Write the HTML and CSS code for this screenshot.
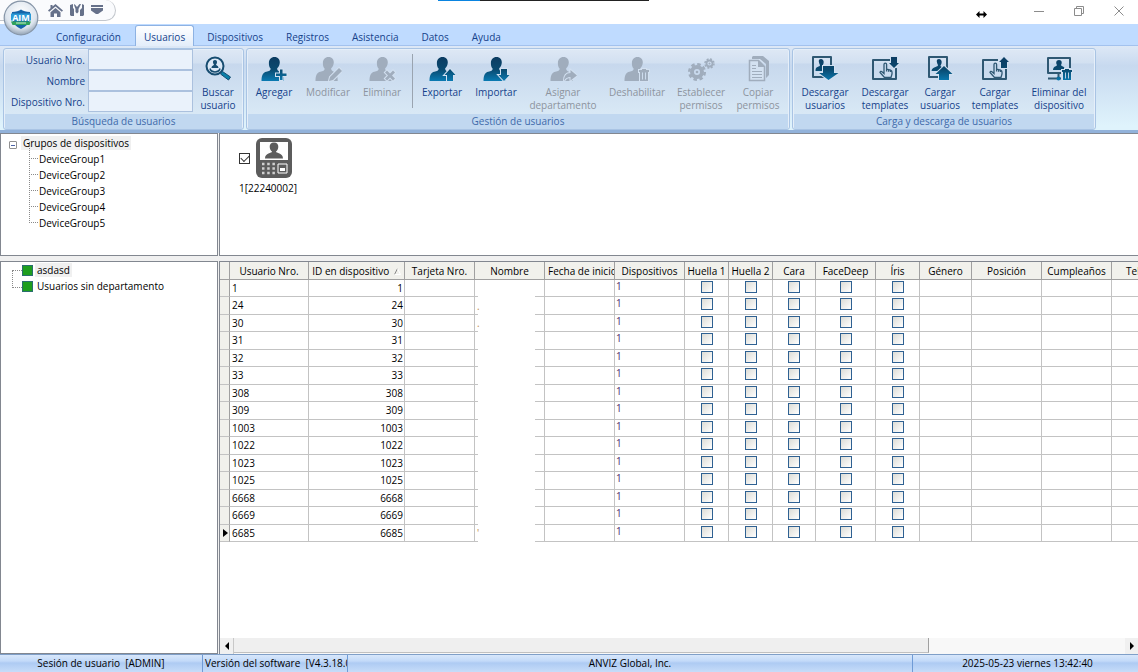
FILE: index.html
```html
<!DOCTYPE html>
<html lang="es">
<head>
    <meta charset="UTF-8">
    <meta name="viewport" content="width=device-width, initial-scale=1.0">
    <title>Usuarios</title>
    <link rel="stylesheet" href="styles.css">
</head>
<body>
    <!-- Shared shapes -->
    <svg class="defs" aria-hidden="true">
        <defs>
            <linearGradient id="blue" gradientUnits="userSpaceOnUse" x1="0" y1="2" x2="0" y2="27">
                <stop offset="0" stop-color="#0c3c62"/>
                <stop offset="0.5" stop-color="#0a4a70"/>
                <stop offset="1" stop-color="#0a7fb8"/>
            </linearGradient>
            <symbol id="person" viewBox="0 0 28 28">
                <path d="M14.500 2c3.600 0 5.500 2.600 5.300 5.600-.1 2.600-1.200 4.600-2.700 6 0 1.500 1 2.600 3.100 3.400 2.600 1 3.500 3.600 3.500 9H1.500c0-5.500 1.500-8.500 4.800-9.200 2.800-.6 4.400-1.600 4.400-3.100C9.200 12.300 8.800 10 8.900 7.600 9 4.500 11 2 14.500 2z"/>
            </symbol>
            <symbol id="hand" viewBox="0 0 14 16">
                <path d="M5 9V2.500a1.300 1.300 0 0 1 2.600 0V7l4 1.200c1 .3 1.400.8 1.400 1.800V12l-1 3.500H5.500L1 10.500c0-1.200 1.300-1.500 2-.8L5 11.500V9M7.600 7v2.500M9.600 7.800v2M11.500 8.300V10" fill="none" stroke-width="1.300"/>
            </symbol>
        </defs>
    </svg>

    <header class="titlebar">
        <div class="quick">
            <button type="button" aria-label="Inicio">
                <svg width="15" height="13" viewBox="0 0 15 13"><path d="M7.500 0L15 6.500l-1.200 1.300L7.500 2.600 1.200 7.800 0 6.500 2.500 4.300V1h2v1.600zM7.500 4l5 4.200V13H9V9.500H6V13H2.500V8.200z"/></svg>
            </button>
            <button type="button" aria-label="Herramientas">
                <svg width="14" height="12" viewBox="0 0 14 12"><path d="M0 1l3-1v4l1 1v7H1l-1-1zM4.500 0L7 3l2.500-3H11L8.500 5v3L7 9.500 5.500 8V5L4 1zM12 0l2 1v10l-1 1h-3V6l2-2z"/></svg>
            </button>
            <button type="button" aria-label="Personalizar">
                <svg width="12" height="10" viewBox="0 0 12 10"><path d="M0 0h12v2H0zM0 3h12v2.500L7 9H5L0 5.500z"/></svg>
            </button>
        </div>
        <div class="accent"></div>
        <svg class="resize" width="11" height="7" viewBox="0 0 11 7"><path d="M0 3.500L3.500 0v2.500h4V0L11 3.500 7.500 7V4.500h-4V7z"/></svg>
        <div class="window-buttons">
            <button type="button" aria-label="Minimizar"><svg width="10" height="10" viewBox="0 0 10 10"><path d="M0 5.500h10"/></svg></button>
            <button type="button" aria-label="Restaurar"><svg width="10" height="10" viewBox="0 0 10 10"><path d="M.5 2.500h7v7h-7zM2.500 2.500v-2h7v7h-2"/></svg></button>
            <button type="button" aria-label="Cerrar"><svg width="10" height="10" viewBox="0 0 10 10"><path d="M.5.5l9 9M9.500.5l-9 9"/></svg></button>
        </div>
    </header>

    <button type="button" class="app-button" aria-label="Menú">
        <svg width="36" height="36" viewBox="0 0 36 36">
            <defs>
                <radialGradient id="orb" cx="0.5" cy="0.35" r="0.65">
                    <stop offset="0" stop-color="#ffffff"/>
                    <stop offset="0.7" stop-color="#dde5ee"/>
                    <stop offset="1" stop-color="#93a3b5"/>
                </radialGradient>
            </defs>
            <circle cx="18" cy="18" r="16.800" fill="url(#orb)" stroke="#8796a8" stroke-width="1.200"/>
            <path d="M9 12c4 0 7-1 9-2.500 2 1.500 5 2.500 9 2.500v6c0 5-4 8.500-9 11-5-2.500-9-6-9-11z" fill="#1565a8"/>
            <path d="M8 13.500h20v7H8z" fill="#2b9ad6"/>
            <text x="18" y="20.500" class="logo-text">AIM</text>
            <path d="M8 21.500h20l-1.500 3.500h-17z" fill="#2fa25b"/>
            <path d="M13 23h10" stroke="#c9ecd3"/>
        </svg>
    </button>

    <nav class="tabs">
        <a href="#">Configuración</a>
        <a href="#" class="active">Usuarios</a>
        <a href="#">Dispositivos</a>
        <a href="#">Registros</a>
        <a href="#">Asistencia</a>
        <a href="#">Datos</a>
        <a href="#">Ayuda</a>
    </nav>

    <div class="ribbon">
        <section class="group">
            <div class="tools">
                <form class="search">
                    <label for="user-no">Usuario Nro.</label><input type="text" id="user-no">
                    <label for="user-name">Nombre</label><input type="text" id="user-name">
                    <label for="device-no">Dispositivo Nro.</label><input type="text" id="device-no">
                </form>
                <button type="button" class="tool w50">
                    <svg width="28" height="28" viewBox="0 0 28 28">
                        <circle cx="11" cy="11" r="8.500" fill="#dbe8f6" stroke="#164c70" stroke-width="2"/>
                        <path d="M18.500 16.500l8 5.500-2 3-8-6z" fill="#0a7fa8" stroke="#164c70"/>
                        <path d="M11 5c1.600 0 2.200 1 2 2.400-.1 1-.5 1.600-1 2.100 0 1 2.500 1 2.500 3.500h-7c0-2.500 2.500-2.500 2.500-3.500-.5-.5-.9-1.100-1-2.100C8.800 6 9.400 5 11 5z" fill="#164c70"/>
                        <path d="M6 13.500c1 4.500 9 4.500 10 0" fill="none" stroke="#164c70" stroke-width="1.500"/>
                    </svg>
                    Buscar<br>usuario
                </button>
            </div>
            <h2>Búsqueda de usuarios</h2>
        </section>

        <section class="group manage">
            <div class="tools">
                <button type="button" class="tool w54">
                    <svg width="28" height="28" viewBox="0 0 28 28"><use href="#person"/><path class="halo" d="M16 18.500h4v-4h2.500v4h4V21h-4v4H20v-4h-4z"/></svg>
                    Agregar
                </button>
                <button type="button" class="tool w54" disabled>
                    <svg width="28" height="28" viewBox="0 0 28 28"><use href="#person"/><path class="halo" d="M15 26l1-4 9-9 3 3-9 9z"/></svg>
                    Modificar
                </button>
                <button type="button" class="tool w54" disabled>
                    <svg width="28" height="28" viewBox="0 0 28 28"><use href="#person"/><path class="halo" d="M17 17.500l2-2 3 3 3-3 2 2-3 3 3 3-2 2-3-3-3 3-2-2 3-3z"/></svg>
                    Eliminar
                </button>
                <span class="divider"></span>
                <button type="button" class="tool w54">
                    <svg width="28" height="28" viewBox="0 0 28 28"><use href="#person"/><path class="halo" d="M22 14l5.500 6H25v6h-6v-6h-2.500z"/></svg>
                    Exportar
                </button>
                <button type="button" class="tool w54">
                    <svg width="28" height="28" viewBox="0 0 28 28"><use href="#person"/><path class="halo" d="M19 14h6v6h2.500L22 26l-5.500-6H19z"/></svg>
                    Importar
                </button>
                <button type="button" class="tool w80" disabled>
                    <svg width="28" height="28" viewBox="0 0 28 28"><use href="#person"/><path class="halo" d="M15 26c0-5 2-8 6.500-8v-3l6.500 5.500-6.500 5V22c-3 0-5 1-6.500 4z"/></svg>
                    Asignar<br>departamento
                </button>
                <button type="button" class="tool w68" disabled>
                    <svg width="28" height="28" viewBox="0 0 28 28"><use href="#person"/><path class="halo" d="M16 15h3v-1h4v1h3v2h-1v9h-8v-9h-1z"/><path d="M19.500 17.500v7M22.500 17.500v7" stroke="#cddcee"/></svg>
                    Deshabilitar
                </button>
                <button type="button" class="tool w60" disabled>
                    <svg width="28" height="28" viewBox="0 0 28 28">
                        <circle cx="10" cy="17" r="7.800" fill="none" stroke="currentColor" stroke-width="2.500" stroke-dasharray="3.500 2.626"/>
                        <circle cx="10" cy="17" r="5" fill="none" stroke="currentColor" stroke-width="4"/>
                        <circle cx="10" cy="17" r="1.300"/>
                        <circle cx="22.500" cy="8.500" r="4.500" fill="none" stroke="currentColor" stroke-width="1.500" stroke-dasharray="2 1.534"/>
                        <circle cx="22.500" cy="8.500" r="3" fill="none" stroke="currentColor" stroke-width="1.800"/>
                        <circle cx="22.500" cy="8.500" r="1"/>
                    </svg>
                    Establecer<br>permisos
                </button>
                <button type="button" class="tool w54" disabled>
                    <svg width="28" height="28" viewBox="0 0 28 28">
                        <path d="M9 1h10l6 5v14l-3 3V9l-6-5H8V2z"/>
                        <path d="M5.500 5.500h9l6 6v14h-15z" fill="#d3e1f1" stroke="currentColor" stroke-width="1.500"/>
                        <path d="M8 13.500h4M8 10.500h4M8 16.500h10M8 19.500h10M8 22.500h10" stroke="currentColor"/>
                        <path d="M14 5v7h7z"/>
                    </svg>
                    Copiar<br>permisos
                </button>
            </div>
            <h2>Gestión de usuarios</h2>
        </section>

        <section class="group transfer">
            <div class="tools">
                <button type="button" class="tool w60">
                    <svg width="28" height="28" viewBox="0 0 28 28">
                        <path class="line" d="M2 2h18v20H2z"/><path d="M10 4c3 0 3.500 4 1.500 6.500 0 1 1 1.500 2.500 2V16H4.500c0-2.500.5-3.500 2-4s2.500-1 2.500-2C7.500 7 7 4 10 4z"/>
                        <path class="halo" d="M12 11h11v7h4.500l-10 7L8 18h4z"/>
                    </svg>
                    Descargar<br>usuarios
                </button>
                <button type="button" class="tool w60">
                    <svg width="28" height="28" viewBox="0 0 28 28">
                        <path class="line" d="M19 5H2v19h23V13"/><use href="#hand" x="8" y="7" width="14" height="16" class="hand"/>
                        <path class="halo" d="M20 2h6v6h2L23 13l-5-5h2z"/>
                    </svg>
                    Descargar<br>templates
                </button>
                <button type="button" class="tool w50">
                    <svg width="28" height="28" viewBox="0 0 28 28">
                        <path class="line" d="M3 2h18v20H3z"/><path d="M13 4c3 0 3.500 4 1.500 6.500 0 1 1 1.500 2.500 2V16H5.500c0-2.500 2.500-3.500 4-4s2.500-1 2.500-2C10.500 7 10 4 13 4z"/>
                        <path class="halo" d="M18 11l8.500 8H23v6H13v-6H9.500z"/>
                    </svg>
                    Cargar<br>usuarios
                </button>
                <button type="button" class="tool w60">
                    <svg width="28" height="28" viewBox="0 0 28 28">
                        <path class="line" d="M17 5H2v19h23V14"/><use href="#hand" x="8" y="7" width="14" height="16" class="hand"/>
                        <path class="halo" d="M23 2l5 5h-2v6h-6V7h-2z"/>
                    </svg>
                    Cargar<br>templates
                </button>
                <button type="button" class="tool w68">
                    <svg width="28" height="28" viewBox="0 0 28 28">
                        <path class="line" d="M16 18H3V3h22v10M3 23.500h13M13.500 19v4"/><circle cx="13.500" cy="23.500" r="2"/>
                        <path d="M14 5c3 0 3.300 3 2 5 0 1.500 4 1 4 5H8c0-4 4-3.500 4-5-1.300-2-1-5 2-5z"/>
                        <path class="halo" d="M17 15h3v-1h4v1h3v2h-1v8h-8v-8h-1z"/><path d="M20.500 17.500v6M23.500 17.500v6" stroke="#b9cfe4"/>
                    </svg>
                    Eliminar del<br>dispositivo
                </button>
            </div>
            <h2>Carga y descarga de usuarios</h2>
        </section>
    </div>

    <main class="workspace">
        <section class="panel groups">
            <ul class="tree">
                <li class="root"><span class="toggle"></span><span class="selected">Grupos de dispositivos</span>
                    <ul>
                        <li>DeviceGroup1</li>
                        <li>DeviceGroup2</li>
                        <li>DeviceGroup3</li>
                        <li>DeviceGroup4</li>
                        <li>DeviceGroup5</li>
                    </ul>
                </li>
            </ul>
        </section>

        <section class="panel devices">
            <label class="device">
                <span class="device-icon">
                    <input type="checkbox" checked>
                    <svg width="36" height="40" viewBox="0 0 36 40">
                        <rect width="36" height="40" rx="6" fill="#5c5c5c"/>
                        <path d="M4 4h28v18H4z" fill="#fff"/>
                        <path d="M18 4.500c3 0 4.500 2 4.300 4.500-.2 2-1 3.500-2.300 4.500 0 2 7 1 7 7H9c0-6 7-5 7-7-1.300-1-2.100-2.500-2.300-4.500C13.500 6.500 15 4.500 18 4.500z" fill="#5c5c5c"/>
                        <path d="M6 26h13M6 30.500h13M6 35h13" stroke="#d0d0d0" stroke-width="2.500" stroke-dasharray="2.500 2.700"/>
                        <path d="M22 26h9v9h-9z" fill="#5c5c5c" stroke="#fff"/>
                        <path d="M24 30h5v3h-5z" fill="#fff"/>
                    </svg>
                </span>
                1[22240002]
            </label>
        </section>

        <section class="panel departments">
            <ul class="dept">
                <li><span class="box"></span><span class="selected">asdasd</span></li>
                <li><span class="box"></span><span>Usuarios sin departamento</span></li>
            </ul>
        </section>

        <section class="panel users">
            <div class="grid">
                <table>
                    <colgroup>
                        <col class="c-mark"><col class="c-user"><col class="c-id"><col class="c-70"><col class="c-70"><col class="c-70"><col class="c-70">
                        <col class="c-44"><col class="c-44"><col class="c-43"><col class="c-60"><col class="c-44"><col class="c-52">
                        <col class="c-70"><col class="c-70"><col class="c-70">
                    </colgroup>
                    <thead>
                        <tr>
                            <th></th>
                            <th>Usuario Nro.</th>
                            <th>ID en dispositivo <svg class="sort" width="7" height="7" viewBox="0 0 7 7"><path d="M.5 6.500l3-6" stroke="#888"/><path d="M3.500.5l3 6h-6" fill="none" stroke="#fff"/></svg></th>
                            <th>Tarjeta Nro.</th>
                            <th>Nombre</th>
                            <th class="clip">Fecha de inicio</th>
                            <th>Dispositivos</th>
                            <th>Huella 1</th>
                            <th>Huella 2</th>
                            <th>Cara</th>
                            <th>FaceDeep</th>
                            <th>Íris</th>
                            <th>Género</th>
                            <th>Posición</th>
                            <th>Cumpleaños</th>
                            <th>Teléfono</th>
                        </tr>
                    </thead>
                    <tbody id="rows"></tbody>
                </table>
            </div>
            <div class="scrollbar">
                <button type="button" aria-label="Izquierda"><svg width="4" height="8" viewBox="0 0 4 8"><path d="M4 0v8L0 4z"/></svg></button>
                <div class="track"><div class="thumb"></div></div>
                <button type="button" aria-label="Derecha"><svg width="4" height="8" viewBox="0 0 4 8"><path d="M0 0v8l4-4z"/></svg></button>
            </div>
        </section>
    </main>

    <footer class="status">
        <div class="session">Sesión de usuario&nbsp; [ADMIN]</div>
        <div class="version">Versión del software&nbsp; [V4.3.18.0]</div>
        <div class="company">ANVIZ Global, Inc.</div>
        <div class="clock">2025-05-23 viernes 13:42:40</div>
    </footer>

    <script src="app.js"></script>
</body>
</html>
```
FILE: styles.css
```css
* {
    box-sizing: border-box;
}
body {
    display: flex;
    flex-direction: column;
    height: 100vh;
    margin: 0;
    overflow: hidden;
    background: #f0f0f0;
    font-family: "Open Sans", "Noto Sans", sans-serif;
    font-size: 10px;
    line-height: 14px;
    color: #000;
}
button {
    padding: 0;
    border: 0;
    background: none;
    font: inherit;
    color: inherit;
}
ul {
    margin: 0;
    padding: 0;
    list-style: none;
}
.defs {
    position: absolute;
    width: 0;
    height: 0;
}

/* Title bar */
.titlebar {
    position: relative;
    display: flex;
    flex: none;
    justify-content: space-between;
    height: 24px;
    background: #fff;
}
.quick {
    display: flex;
    align-items: center;
    gap: 7px;
    width: 116px;
    height: 21px;
    padding-left: 48px;
    border: 1px solid #c3c7cd;
    border-left: 0;
    border-top: 0;
    border-radius: 0 11px 11px 0;
    background: #fafbfd;
    fill: #66718a;
}
.quick button {
    display: flex;
}
.accent {
    position: absolute;
    top: 0;
    left: 438px;
    width: 211px;
    height: 1px;
    background: linear-gradient(90deg, #0a84e0 42px, #222 42px);
}
.resize {
    position: absolute;
    top: 11px;
    right: 151px;
}
.window-buttons {
    display: flex;
    align-items: center;
    gap: 30px;
    height: 21px;
    padding-right: 14px;
}
.window-buttons button {
    display: flex;
}
.window-buttons path {
    fill: none;
    stroke: #8c8c8c;
}
.app-button {
    position: absolute;
    top: 0;
    left: 3px;
    z-index: 2;
    height: 36px;
}
.logo-text {
    fill: #fff;
    font-size: 9px;
    font-weight: 700;
    text-anchor: middle;
}

/* Tabs */
.tabs {
    display: flex;
    flex: none;
    height: 22px;
    padding: 1px 0 0 45px;
    background: #bfdbff;
    border-bottom: 1px solid #a3c2ee;
}
.tabs a {
    height: 21px;
    padding: 4px 11px 0 10px;
    border: 1px solid transparent;
    border-bottom: 0;
    border-radius: 3px 3px 0 0;
    color: #15428b;
    text-decoration: none;
}
.tabs .active {
    padding: 4px 8px 0;
    margin: 0 2px;
    border-color: #8db2e3;
    background: linear-gradient(#fff, #e3edfa);
}

/* Ribbon */
.ribbon {
    display: flex;
    flex: none;
    gap: 2px;
    height: 87px;
    padding: 2px 3px 0;
    background: linear-gradient(#dde8f6, #c7d9ef 20px, #dff3fc 80px);
    border-bottom: 3px solid #92b2da;
}
.group {
    display: flex;
    flex-direction: column;
    height: 82px;
    border: 1px solid #a9c4e4;
    border-radius: 3px;
    background: linear-gradient(#dee8f5, #d2e0f1 14px, #c7d8ed 15px, #d8e8f5 64px);
    box-shadow: inset 0 0 0 1px #e6eff9;
}
.group h2 {
    margin: 0 1px;
    height: 15px;
    background: #c1d8f0;
    font-size: 10px;
    font-weight: 400;
    line-height: 15px;
    text-align: center;
    color: #3e6aaa;
}
.tools {
    display: flex;
    flex: 1;
}
.manage .tools {
    padding-right: 4px;
}
.transfer .tools {
    padding: 0 2px;
}
.search {
    display: grid;
    grid-template-columns: 81px 105px;
    grid-auto-rows: 21px;
    align-items: center;
    align-content: start;
    text-align: right;
    column-gap: 3px;
    color: #15428b;
}
.search input {
    width: 100%;
    height: 21px;
    padding: 2px 4px;
    border: 1px solid #abc1de;
    background: #eaf2fb;
    font: inherit;
}
.tool {
    flex: none;
    align-self: flex-start;
    padding-top: 6px;
    line-height: 13px;
    text-align: center;
    white-space: nowrap;
    color: #15428b;
    fill: url(#blue);
}
.tool svg {
    display: block;
    margin: 0 auto 3px;
}
.tool:disabled {
    color: #8d949e;
    fill: #a0adbd;
}
.tool:disabled svg {
    color: #a0adbd;
}
.w50 { width: 50px; }
.w54 { width: 54px; }
.w60 { width: 60px; }
.w68 { width: 68px; }
.w80 { width: 80px; }
.halo {
    stroke: #d3e1f1;
    stroke-width: 2;
    paint-order: stroke;
}
.line {
    fill: none;
    stroke: #2f5873;
    stroke-width: 2;
    stroke-linejoin: round;
}
.hand {
    stroke: #2f5873;
}
.divider {
    width: 1px;
    height: 54px;
    margin: 5px 2px 0 3px;
    background: #9aa4b0;
}

/* Panels */
.workspace {
    display: grid;
    flex: 1;
    grid-template-columns: 219px 1fr;
    grid-template-rows: 123px 1fr;
    gap: 5px 0;
    min-height: 0;
}
.panel {
    min-width: 0;
    border: 1px solid #828790;
    background: #fff;
}
.groups,
.departments {
    margin-right: 1px;
}
.devices,
.users {
    border-right: 0;
}
.tree {
    padding: 1px 0 0 8px;
    line-height: 16px;
}
.toggle {
    display: inline-block;
    width: 8px;
    height: 8px;
    margin-right: 4px;
    border: 1px solid #919191;
    border-radius: 1px;
    background: linear-gradient(#4b63a7, #4b63a7) center / 4px 1px no-repeat #fff;
    vertical-align: -2px;
}
.selected {
    display: inline-block;
    padding: 0 2px;
    background: #f0f0f0;
    line-height: 14px;
}
.tree .root > ul {
    margin-left: 20px;
}
.tree .root > ul li {
    position: relative;
    height: 16px;
    padding-left: 10px;
    line-height: 16px;
}
.tree .root > ul li::before {
    content: "";
    position: absolute;
    left: 0;
    bottom: 8px;
    width: 8px;
    height: 16px;
    border-left: 1px dotted #8a8a8a;
    border-bottom: 1px dotted #8a8a8a;
}
.device {
    display: inline-flex;
    flex-direction: column;
    align-items: flex-start;
    padding: 4px 0 0 19px;
    line-height: 20px;
}
.device-icon {
    display: flex;
    align-items: center;
    gap: 6px;
}
.device input {
    appearance: none;
    display: grid;
    place-items: center;
    width: 11px;
    height: 11px;
    margin: 0;
    border: 1px solid #333;
}
.device input:checked::before {
    content: "";
    width: 7px;
    height: 4px;
    margin-bottom: 2px;
    border: solid #333;
    border-width: 0 0 1px 1px;
    transform: rotate(-45deg);
}
.dept {
    position: relative;
    padding: 0 0 0 21px;
}
.dept::before {
    content: "";
    position: absolute;
    top: 8px;
    left: 11px;
    width: 9px;
    height: 16px;
    border: 1px dotted #8a8a8a;
    border-right: 0;
}
.dept li {
    display: flex;
    align-items: center;
    gap: 2px;
    height: 16px;
}
.dept li span:last-child {
    padding: 0 2px;
}
.box {
    width: 11px;
    height: 11px;
    border: 1px solid #2a6e6e;
    background: #1e9e1e;
}

/* Users table */
.users {
    display: flex;
    flex-direction: column;
    border-bottom: 0;
}
.grid {
    flex: 1;
    min-height: 0;
    overflow: hidden;
}
table {
    width: 961px;
    table-layout: fixed;
    border-collapse: separate;
    border-spacing: 0;
}
.c-mark { width: 10px; }
.c-user { width: 79px; }
.c-id { width: 96px; }
.c-43 { width: 43px; }
.c-44 { width: 44px; }
.c-52 { width: 52px; }
.c-60 { width: 60px; }
.c-70 { width: 70px; }
th {
    height: 18px;
    padding: 0;
    border-right: 1px solid #a0a0a0;
    border-bottom: 1px solid #a0a0a0;
    background: #f1f1ec;
    font-weight: 400;
    text-align: center;
    white-space: nowrap;
    overflow: hidden;
}
.sort {
    margin-left: 2px;
}
.clip {
    padding-left: 3px;
    text-align: left;
}
td {
    height: 17px;
    padding: 0 2px;
    border-right: 1px solid #c3c3c3;
    border-bottom: 1px solid #c3c3c3;
    overflow: hidden;
    line-height: 13px;
}
tbody tr:nth-child(even) td {
    height: 18px;
}
td:first-child {
    padding: 0 0 0 3px;
    background: #f1f1ec;
    border-right-color: #a0a0a0;
}
td:first-child svg {
    display: block;
}
.num {
    padding-right: 1px;
    text-align: right;
}
.name {
    border-bottom: 0;
    background:
        linear-gradient(#c3c3c3, #c3c3c3) left bottom / 3px 1px no-repeat,
        linear-gradient(#c3c3c3, #c3c3c3) right bottom / 9px 1px no-repeat;
    color: #c08a4a;
}
.dev {
    padding-left: 1px;
    color: #4b2f6b;
    vertical-align: top;
}
.check {
    padding: 0;
    text-align: center;
    vertical-align: top;
}
.check input {
    appearance: none;
    display: block;
    width: 12px;
    height: 12px;
    margin: 1px auto 0;
    border: 1px solid #2f6192;
    background: linear-gradient(135deg, #dcdcd6, #fff);
}
.scrollbar {
    display: flex;
    flex: none;
    height: 16px;
    background: #f0f0f0;
}
.scrollbar button {
    display: flex;
    align-items: center;
    justify-content: center;
    width: 13px;
}
.track {
    flex: 1;
    background: #f8f8f8;
    border-left: 1px solid #c8c8c8;
}
.thumb {
    width: 78%;
    height: 15px;
    background: #efefef;
    border-right: 1px solid #a0a0a0;
    border-bottom: 1px solid #c0c0c0;
}

/* Status bar */
.status {
    display: flex;
    flex: none;
    height: 18px;
    border-top: 1px solid #7f9fc8;
    background: linear-gradient(#d8e7fb, #c3daf9 6px, #aecbf3 8px, #c6dcf9);
    line-height: 16px;
    text-align: center;
    white-space: nowrap;
}
.status div {
    overflow: hidden;
    border-right: 1px solid #6f9bd6;
}
.session { width: 203px; }
.version {
    width: 145px;
    padding-left: 2px;
    text-align: left;
}
.company { flex: 1; }
.status .clock {
    width: 225px;
    padding-left: 4px;
    border-right: 0;
}
```
FILE: app.js
```js
const users = [1, 24, 30, 31, 32, 33, 308, 309, 1003, 1022, 1023, 1025, 6668, 6669, 6685];
const names = { 24: '.', 30: '.', 6685: "'" };
const current = 6685;
const checks = ['Huella 1', 'Huella 2', 'Cara', 'FaceDeep', 'Íris'];
const body = document.getElementById('rows');

users.forEach(function (id) {
    const row = document.createElement('tr');
    const marker = id === current
        ? '<svg width="5" height="8" viewBox="0 0 5 8"><path d="M0 0v8l5-4z"/></svg>'
        : '';
    row.innerHTML = `<td>${marker}</td><td>${id}</td><td class="num">${id}</td><td></td><td class="name">${names[id] || ''}</td><td></td><td class="dev">1</td>`
        + checks.map(name => `<td class="check"><input type="checkbox" aria-label="${name} ${id}"></td>`).join('')
        + '<td></td><td></td><td></td><td></td>';
    body.appendChild(row);
});
```
